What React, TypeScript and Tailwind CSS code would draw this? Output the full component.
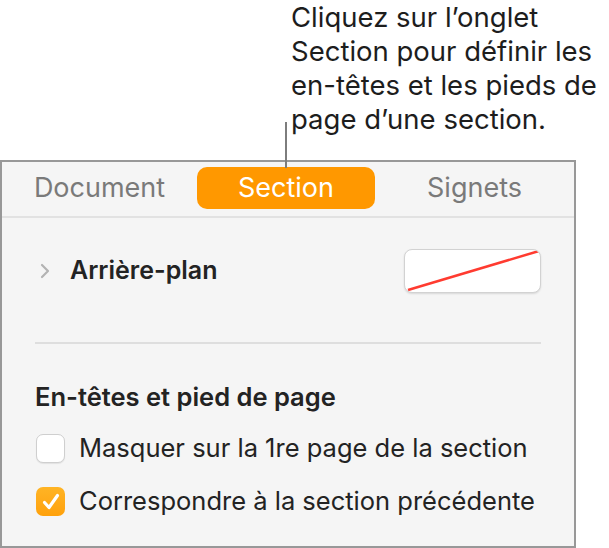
import React from "react";

const font = { fontFamily: "Inter, 'Noto Sans', sans-serif" };

function Check({ checked }: { checked?: boolean }) {
  if (checked) {
    return (
      <div className="w-[29px] h-[29px] rounded-[7px] bg-gradient-to-b from-[#ffb424] to-[#ffa10a] flex items-center justify-center shrink-0">
        <svg width="20" height="20" viewBox="0 0 20 20">
          <path d="M3.5 10.5 L8 15.5 L16.5 3.5" fill="none" stroke="white" strokeWidth="3.2" strokeLinecap="round" strokeLinejoin="round" />
        </svg>
      </div>
    );
  }
  return <div className="w-[29px] h-[29px] rounded-[7px] bg-white border border-[#cfcfcf] shadow-[0_1px_1px_rgba(0,0,0,0.08)] shrink-0" />;
}

export default function App() {
  return (
    <div className="w-[609px] h-[548px] bg-white flex flex-col relative overflow-hidden" style={font}>
      <div className="h-[160px] shrink-0 pl-[291px] pt-0">
        <p className="text-[27.5px] leading-[34px] text-[#1d1d1d] whitespace-nowrap">
          Cliquez sur l’onglet
          <br />
          Section pour définir les
          <br />
          en-têtes et les pieds de
          <br />
          page d’une section.
        </p>
      </div>
      <div className="absolute left-[285px] top-[122px] w-[2px] h-[46px] bg-[#7d7d7d] z-10" />
      <div className="w-[576px] h-[388px] border-2 border-[#989898] bg-[#f5f5f5] flex flex-col shrink-0">
        <div className="flex items-start pt-[5px] h-[56px] border-b-2 border-[#e2e2e2] shrink-0">
          <div className="w-[195px] h-[42px] flex items-center justify-center text-[27px] text-[#7a7a7a]">Document</div>
          <div className="w-[178px] h-[42px] rounded-[10px] bg-[#ff9800] flex items-center justify-center text-[27px] text-white">Section</div>
          <div className="flex-1 h-[42px] flex items-center justify-center text-[27px] text-[#7a7a7a]">Signets</div>
        </div>
        <div className="flex flex-col px-[33px]">
          <div className="flex items-center mt-[31px] h-[44px]">
            <svg width="10" height="16" viewBox="0 0 10 16" className="ml-[5px]">
              <path d="M2 2 L8 8 L2 14" fill="none" stroke="#b3b3b3" strokeWidth="2.2" strokeLinecap="round" strokeLinejoin="round" />
            </svg>
            <span className="ml-[20px] text-[25px] font-semibold text-[#232323]">Arrière-plan</span>
            <div className="ml-auto w-[137px] h-[44px] rounded-[8px] bg-white border border-[#d2d2d2] shadow-[0_1px_2px_rgba(0,0,0,0.12)] overflow-hidden">
              <svg width="135" height="42" viewBox="0 0 135 42" preserveAspectRatio="none">
                <line x1="3" y1="40" x2="134" y2="1" stroke="#ff3b30" strokeWidth="2.5" />
              </svg>
            </div>
          </div>
          <div className="mt-[49px] h-[2px] bg-[#dedede]" />
          <div className="mt-[37px] h-[32px] flex items-center text-[25.5px] font-semibold text-[#232323] whitespace-nowrap">En-têtes et pied de page</div>
          <div className="mt-[21px] flex items-center gap-[14px] h-[29px] ml-[1px]">
            <Check />
            <span className="text-[25.5px] text-[#232323] whitespace-nowrap">Masquer sur la 1re page de la section</span>
          </div>
          <div className="mt-[24px] flex items-center gap-[14px] h-[29px] ml-[1px]">
            <Check checked />
            <span className="text-[25.5px] text-[#232323] whitespace-nowrap">Correspondre à la section précédente</span>
          </div>
        </div>
      </div>
    </div>
  );
}
